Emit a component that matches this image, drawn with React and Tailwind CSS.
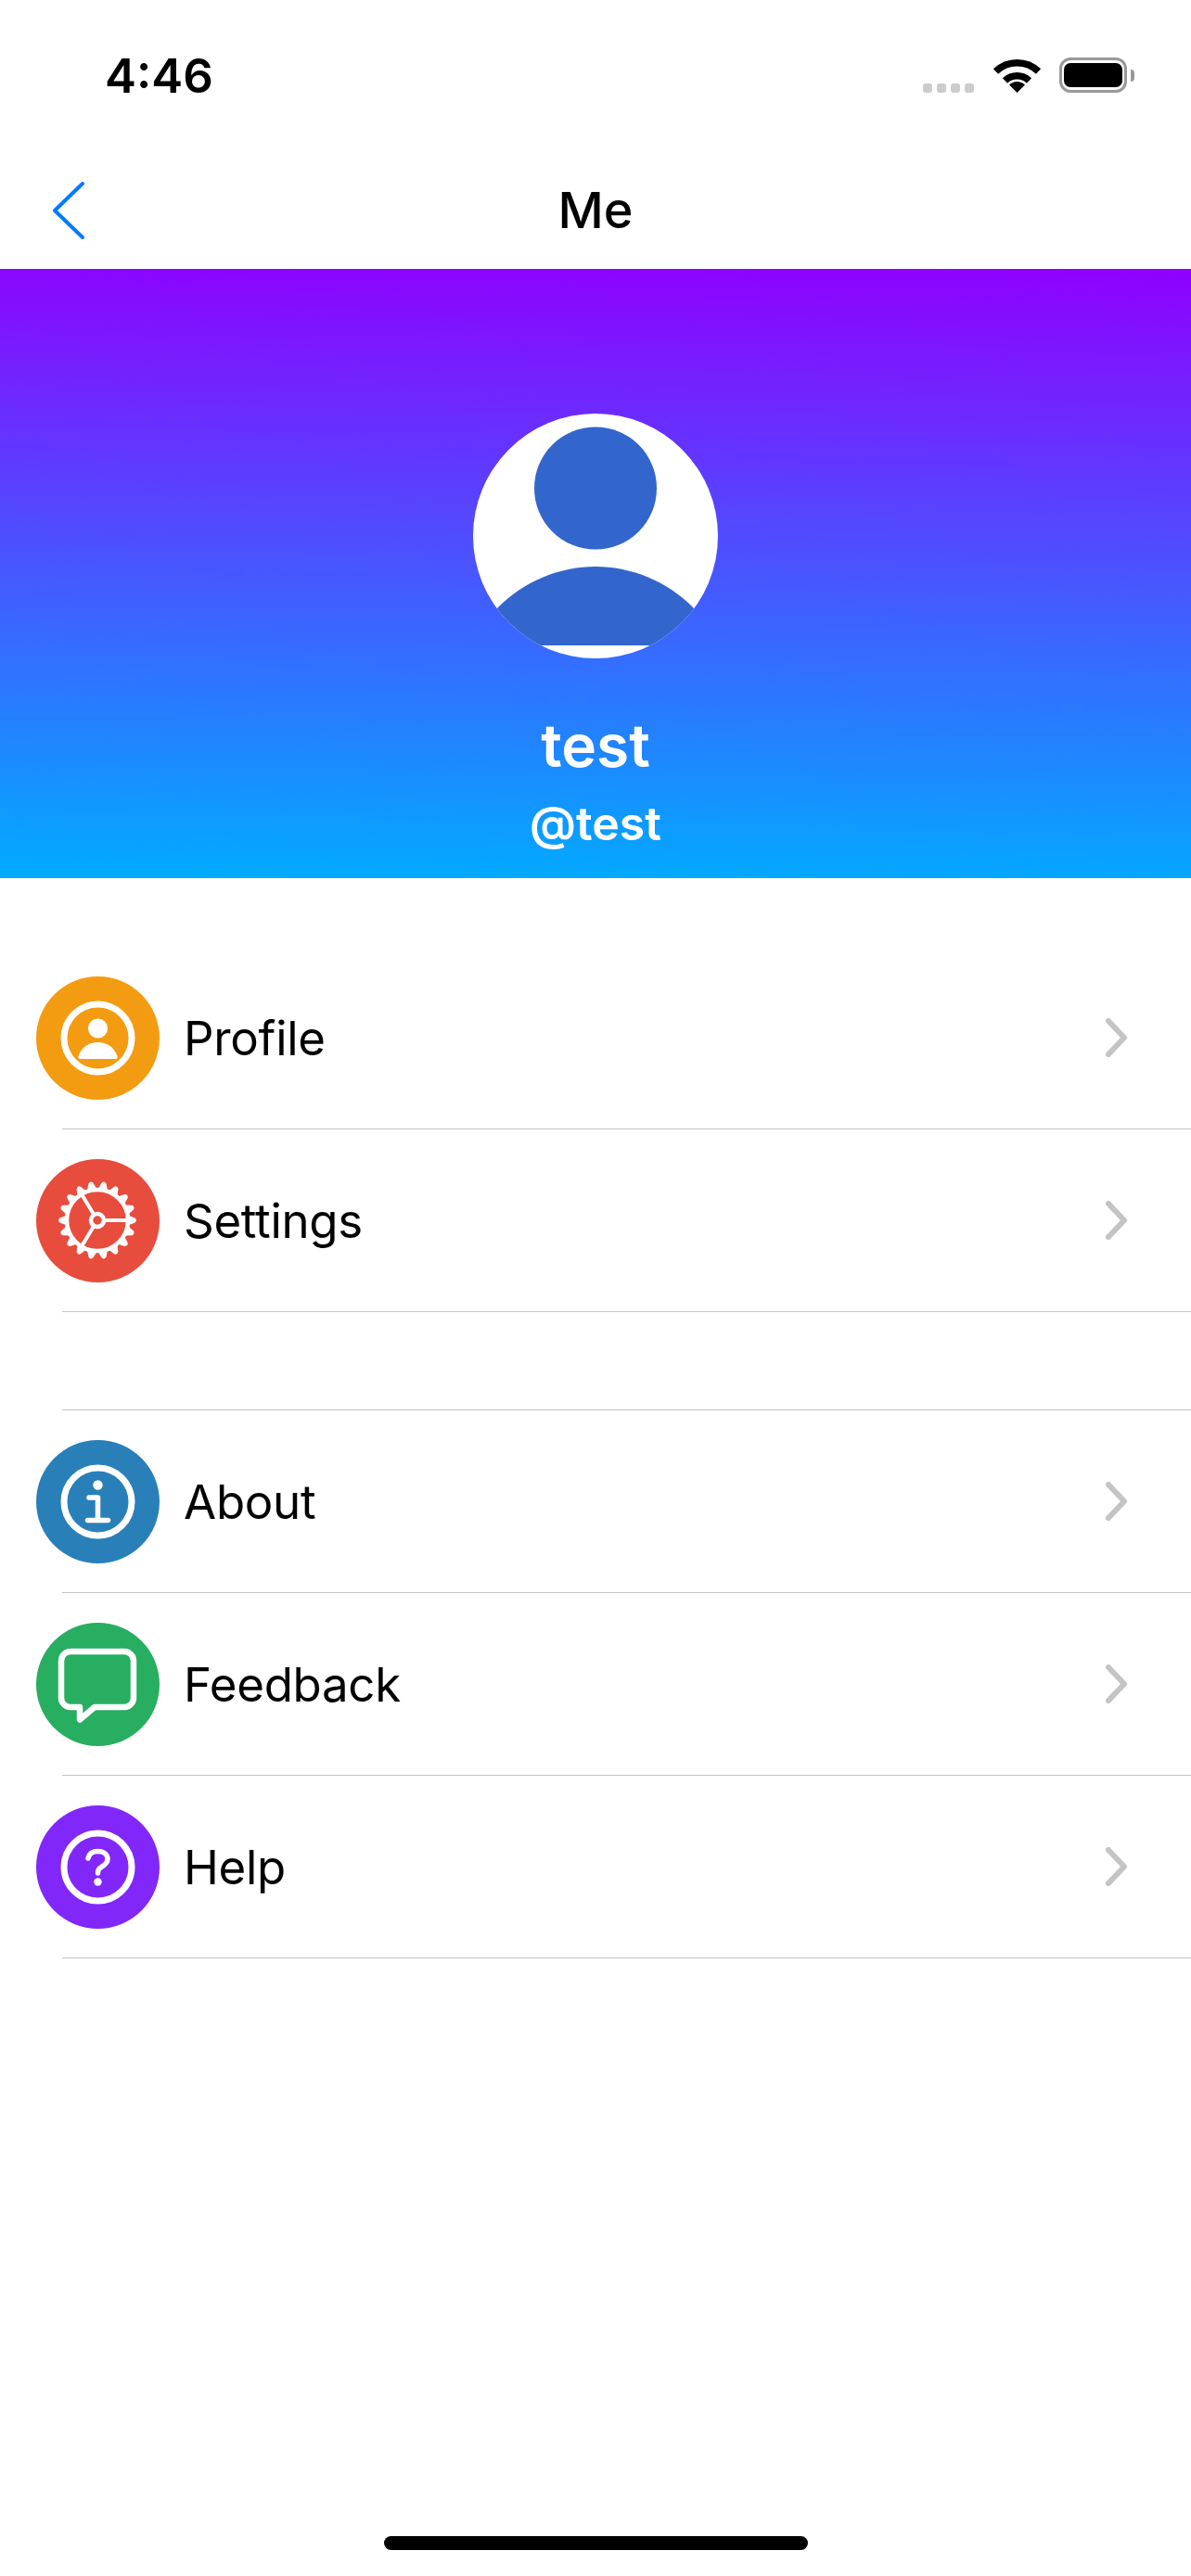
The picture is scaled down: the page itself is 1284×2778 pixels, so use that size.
import { Fragment } from 'react';

const teeth = Array.from({ length: 18 }, (_, i) => i * 20);

function Ring() {
  return <circle cx="66.5" cy="66.5" r="36.5" fill="none" stroke="#fff" strokeWidth="7" />;
}

function ProfileGlyph() {
  return (
    <>
      <Ring />
      <circle cx="66.5" cy="56" r="10.5" fill="#fff" />
      <path
        d="M48 89 Q44.5 89 45.5 86 C49 76 57 71 66.5 71 C76 71 84 76 87.5 86 Q88.5 89 85 89 Z"
        fill="#fff"
      />
    </>
  );
}

function GearGlyph() {
  return (
    <g>
      <circle cx="66" cy="66" r="33" fill="none" stroke="#fff" strokeWidth="4.5" />
      <circle cx="66" cy="66" r="7" fill="none" stroke="#fff" strokeWidth="4.5" />
      <path
        d="M73 66 H97 M62.3 60 L49 38 M62.3 72 L49 94"
        fill="none"
        stroke="#fff"
        strokeWidth="4"
      />
      {teeth.map((deg) => (
        <path
          key={deg}
          d="M99 60.5 L106.5 63.5 Q109.5 66 106.5 68.5 L99 71.5 Z"
          fill="#fff"
          transform={`rotate(${deg} 66 66)`}
        />
      ))}
    </g>
  );
}

function InfoGlyph() {
  return (
    <>
      <Ring />
      <circle cx="66.5" cy="48.5" r="5.2" fill="#fff" />
      <path
        d="M57 62 H66.5 V86.5 M55.5 86.5 H77.5"
        fill="none"
        stroke="#fff"
        strokeWidth="5.5"
        strokeLinecap="round"
        strokeLinejoin="round"
      />
    </>
  );
}

function FeedbackGlyph() {
  return (
    <path
      d="M37 31 H95 a10 10 0 0 1 10 10 V81 a10 10 0 0 1 -10 10 H63 L47 104.5 V91 H37 a10 10 0 0 1 -10 -10 V41 a10 10 0 0 1 10 -10 Z"
      fill="none"
      stroke="#fff"
      strokeWidth="6.5"
      strokeLinejoin="round"
    />
  );
}

function HelpGlyph() {
  return (
    <>
      <Ring />
      <path
        d="M56 57 C57 52 61 49.5 66.5 49.5 C73 49.5 77 53 77 58 C77 62 74 64 71 66 C68 68 66.5 69 66.5 73"
        fill="none"
        stroke="#fff"
        strokeWidth="5.5"
        strokeLinecap="round"
      />
      <circle cx="66.5" cy="82.5" r="4.2" fill="#fff" />
    </>
  );
}

const firstGroup = [
  { label: 'Profile', color: 'bg-[#f39c12]', glyph: <ProfileGlyph /> },
  { label: 'Settings', color: 'bg-[#e74c3c]', glyph: <GearGlyph /> },
];

const secondGroup = [
  { label: 'About', color: 'bg-[#2980b9]', glyph: <InfoGlyph /> },
  { label: 'Feedback', color: 'bg-[#27ae60]', glyph: <FeedbackGlyph /> },
  { label: 'Help', color: 'bg-[#8227f9]', glyph: <HelpGlyph /> },
];

function Separator() {
  return <div className="ml-[67px] h-px bg-[#c4c4c6]" />;
}

function MenuRow({ label, color, glyph }) {
  return (
    <>
      <div className="flex h-[196px] items-center pr-[68px] pl-[39px]">
        <div className={`h-[133px] w-[133px] shrink-0 rounded-full ${color}`}>
          <svg viewBox="0 0 133 133" className="h-full w-full">
            {glyph}
          </svg>
        </div>
        <span className="ml-[26px] flex-1 text-[51px] leading-none tracking-[-0.3px] text-black">
          {label}
        </span>
        <svg viewBox="0 0 24 42" className="h-[42px] w-[24px]">
          <path
            d="M3 3 L20 21 L3 39"
            fill="none"
            stroke="#c4c4c7"
            strokeWidth="6"
            strokeLinecap="round"
            strokeLinejoin="round"
          />
        </svg>
      </div>
      <Separator />
    </>
  );
}

function StatusBar() {
  return (
    <div className="flex h-[164px] items-start justify-between pt-[55px] pr-[61px] pl-[113px]">
      <span className="text-[51px] leading-[54px] font-semibold text-black">4:46</span>
      <div className="flex items-end pt-[6px]">
        <div className="flex gap-[5px]">
          {[0, 1, 2, 3].map((dot) => (
            <div key={dot} className="h-[10px] w-[10px] rounded-[3px] bg-[#cccccc]" />
          ))}
        </div>
        <svg viewBox="0 0 53 39" className="ml-[20px] h-[39px] w-[53px]">
          <path d="M3.5 16 A33 33 0 0 1 49.5 16" fill="none" stroke="#000" strokeWidth="7.5" />
          <path d="M13.5 26 A19 19 0 0 1 39.5 26" fill="none" stroke="#000" strokeWidth="7.5" />
          <path d="M26.5 39 L18 30.5 A12 12 0 0 1 35 30.5 Z" fill="#000" />
        </svg>
        <div className="ml-[19px] flex items-center">
          <div className="flex h-[38px] w-[73px] items-center justify-center rounded-[12px] border-[3px] border-[#999999]">
            <div className="h-[26px] w-[63px] rounded-[7px] bg-black" />
          </div>
          <div className="ml-[4px] h-[13px] w-[4px] rounded-r-[4px] bg-[#999999]" />
        </div>
      </div>
    </div>
  );
}

function NavBar() {
  return (
    <div className="relative flex h-[126px] items-center justify-center">
      <svg viewBox="0 0 36 62" className="absolute top-[32px] left-[56px] h-[62px] w-[36px]">
        <path
          d="M33 2 L3 31 L33 60"
          fill="none"
          stroke="#007aff"
          strokeWidth="4"
          strokeLinecap="round"
          strokeLinejoin="round"
        />
      </svg>
      <span className="text-[54px] leading-none font-medium text-black">Me</span>
    </div>
  );
}

function Avatar() {
  return (
    <svg viewBox="0 0 264 264" className="h-[264px] w-[264px]">
      <defs>
        <clipPath id="avatar-clip">
          <circle cx="132" cy="132" r="132" />
        </clipPath>
      </defs>
      <circle cx="132" cy="132" r="132" fill="#fff" />
      <circle cx="132" cy="80.5" r="66" fill="#3366cc" />
      <path
        d="M26 210 C55 180 95 165 132 165 C169 165 209 180 238 210 L238 250 L26 250 Z"
        fill="#3366cc"
        clipPath="url(#avatar-clip)"
      />
    </svg>
  );
}

export default function App() {
  return (
    <div className="flex min-h-[2778px] flex-col bg-white font-['Inter',sans-serif]">
      <StatusBar />
      <NavBar />

      <div className="flex h-[657px] flex-col items-center bg-linear-[181deg,#8f00ff,#00acff] pt-[156px] text-white">
        <Avatar />
        <div className="mt-[62px] text-[64px] leading-none font-semibold">test</div>
        <div className="mt-[27px] text-[50px] leading-none font-semibold">@test</div>
      </div>

      <div className="pt-[74px]">
        {firstGroup.map((item) => (
          <Fragment key={item.label}>
            <MenuRow {...item} />
          </Fragment>
        ))}
      </div>

      <div className="pt-[105px]">
        <Separator />
        {secondGroup.map((item) => (
          <Fragment key={item.label}>
            <MenuRow {...item} />
          </Fragment>
        ))}
      </div>

      <div className="mt-auto flex justify-center pb-[28px]">
        <div className="h-[15px] w-[457px] rounded-full bg-black" />
      </div>
    </div>
  );
}
